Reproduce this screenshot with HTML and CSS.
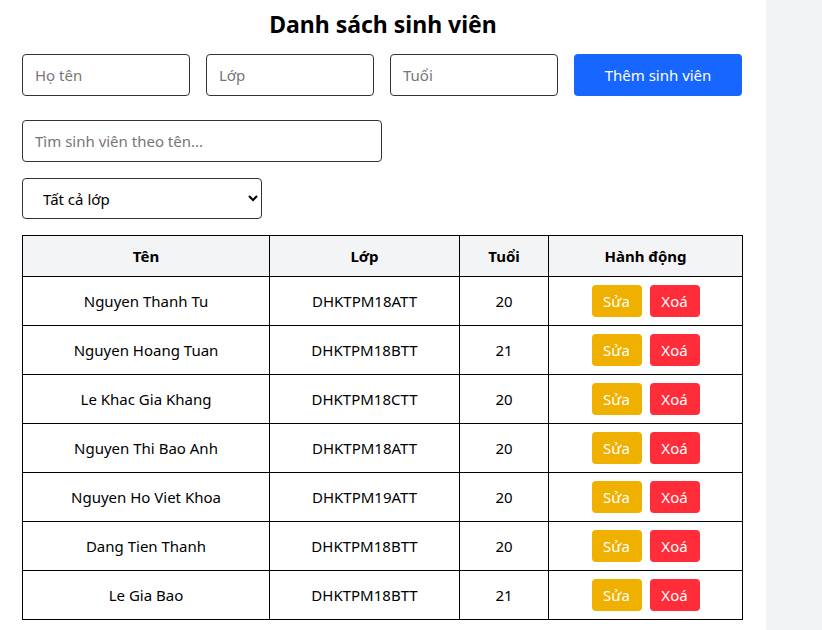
FILE: index.html
```html
<!DOCTYPE html>
<html lang="vi">
<head>
<meta charset="utf-8">
<title>Danh sách sinh viên</title>
<link rel="stylesheet" href="styles.css">
</head>
<body>
<div class="page">
  <main class="main">
    <h1 class="title">Danh sách sinh viên</h1>
    <div class="form-row">
      <input class="field" type="text" placeholder="Họ tên">
      <input class="field" type="text" placeholder="Lớp">
      <input class="field" type="text" placeholder="Tuổi">
      <button class="btn-add">Thêm sinh viên</button>
    </div>
    <input class="field search" type="text" placeholder="Tìm sinh viên theo tên...">
    <select class="filter">
      <option>Tất cả lớp</option>
    </select>
    <table class="table">
      <colgroup>
        <col class="c-name"><col class="c-class"><col class="c-age"><col class="c-act">
      </colgroup>
      <thead>
        <tr><th>Tên</th><th>Lớp</th><th>Tuổi</th><th>Hành động</th></tr>
      </thead>
      <tbody>
        <tr><td>Nguyen Thanh Tu</td><td>DHKTPM18ATT</td><td>20</td><td><div class="actions"><button class="btn-edit">Sửa</button><button class="btn-del">Xoá</button></div></td></tr>
        <tr><td>Nguyen Hoang Tuan</td><td>DHKTPM18BTT</td><td>21</td><td><div class="actions"><button class="btn-edit">Sửa</button><button class="btn-del">Xoá</button></div></td></tr>
        <tr><td>Le Khac Gia Khang</td><td>DHKTPM18CTT</td><td>20</td><td><div class="actions"><button class="btn-edit">Sửa</button><button class="btn-del">Xoá</button></div></td></tr>
        <tr><td>Nguyen Thi Bao Anh</td><td>DHKTPM18ATT</td><td>20</td><td><div class="actions"><button class="btn-edit">Sửa</button><button class="btn-del">Xoá</button></div></td></tr>
        <tr><td>Nguyen Ho Viet Khoa</td><td>DHKTPM19ATT</td><td>20</td><td><div class="actions"><button class="btn-edit">Sửa</button><button class="btn-del">Xoá</button></div></td></tr>
        <tr><td>Dang Tien Thanh</td><td>DHKTPM18BTT</td><td>20</td><td><div class="actions"><button class="btn-edit">Sửa</button><button class="btn-del">Xoá</button></div></td></tr>
        <tr><td>Le Gia Bao</td><td>DHKTPM18BTT</td><td>21</td><td><div class="actions"><button class="btn-edit">Sửa</button><button class="btn-del">Xoá</button></div></td></tr>
      </tbody>
    </table>
  </main>
  <div class="side"></div>
</div>
</body>
</html>
```

FILE: styles.css
```css
* { box-sizing: border-box; }
html, body { margin: 0; padding: 0; }
body {
  font-family: "Noto Sans", "Open Sans", sans-serif;
  font-size: 15px;
  color: #000;
  background: #f2f3f5;
}
.page {
  display: flex;
  min-height: 630px;
}
.main {
  width: 766px;
  background: #fff;
  padding: 8px 22px 40px;
  display: flex;
  flex-direction: column;
  align-items: flex-start;
}
.side { flex: 1; }
.title {
  align-self: stretch;
  text-align: center;
  margin: 0 0 14px;
  font-size: 23px;
  line-height: 32px;
  font-weight: 700;
}
.form-row {
  display: flex;
  gap: 16px;
  width: 720px;
  margin-bottom: 24px;
}
.field {
  width: 168px;
  height: 42px;
  border: 1px solid #333;
  border-radius: 4px;
  padding: 0 12px;
  font-family: inherit;
  font-size: 15px;
  color: #000;
  background: #fff;
  outline: none;
}
.field::placeholder { color: #767676; }
.btn-add {
  width: 168px;
  height: 42px;
  border: none;
  border-radius: 4px;
  background: #1766ff;
  color: #fff;
  font-family: inherit;
  font-size: 15px;
}
.search {
  width: 360px;
  margin-bottom: 16px;
}
.filter {
  width: 240px;
  height: 41px;
  border: 1px solid #333;
  border-radius: 4px;
  padding: 0 16px;
  font-family: inherit;
  font-size: 15px;
  color: #000;
  background: #fff;
  margin-bottom: 16px;
}
.table {
  width: 720px;
  border-collapse: collapse;
  table-layout: fixed;
}
.c-name { width: 247px; }
.c-class { width: 190px; }
.c-age { width: 89px; }
.c-act { width: 194px; }
.table th, .table td {
  border: 1px solid #000;
  text-align: center;
  font-size: 15px;
}
.table th {
  background: #f3f4f6;
  height: 41px;
  font-weight: 700;
}
.table td { height: 49px; }
.actions {
  display: flex;
  justify-content: center;
  gap: 8px;
}
.btn-edit, .btn-del {
  width: 50px;
  height: 32px;
  border: none;
  border-radius: 4px;
  color: #fff;
  font-family: inherit;
  font-size: 15px;
  padding: 0;
}
.btn-edit { background: #f0b000; }
.btn-del { background: #ff2c3a; }
```
